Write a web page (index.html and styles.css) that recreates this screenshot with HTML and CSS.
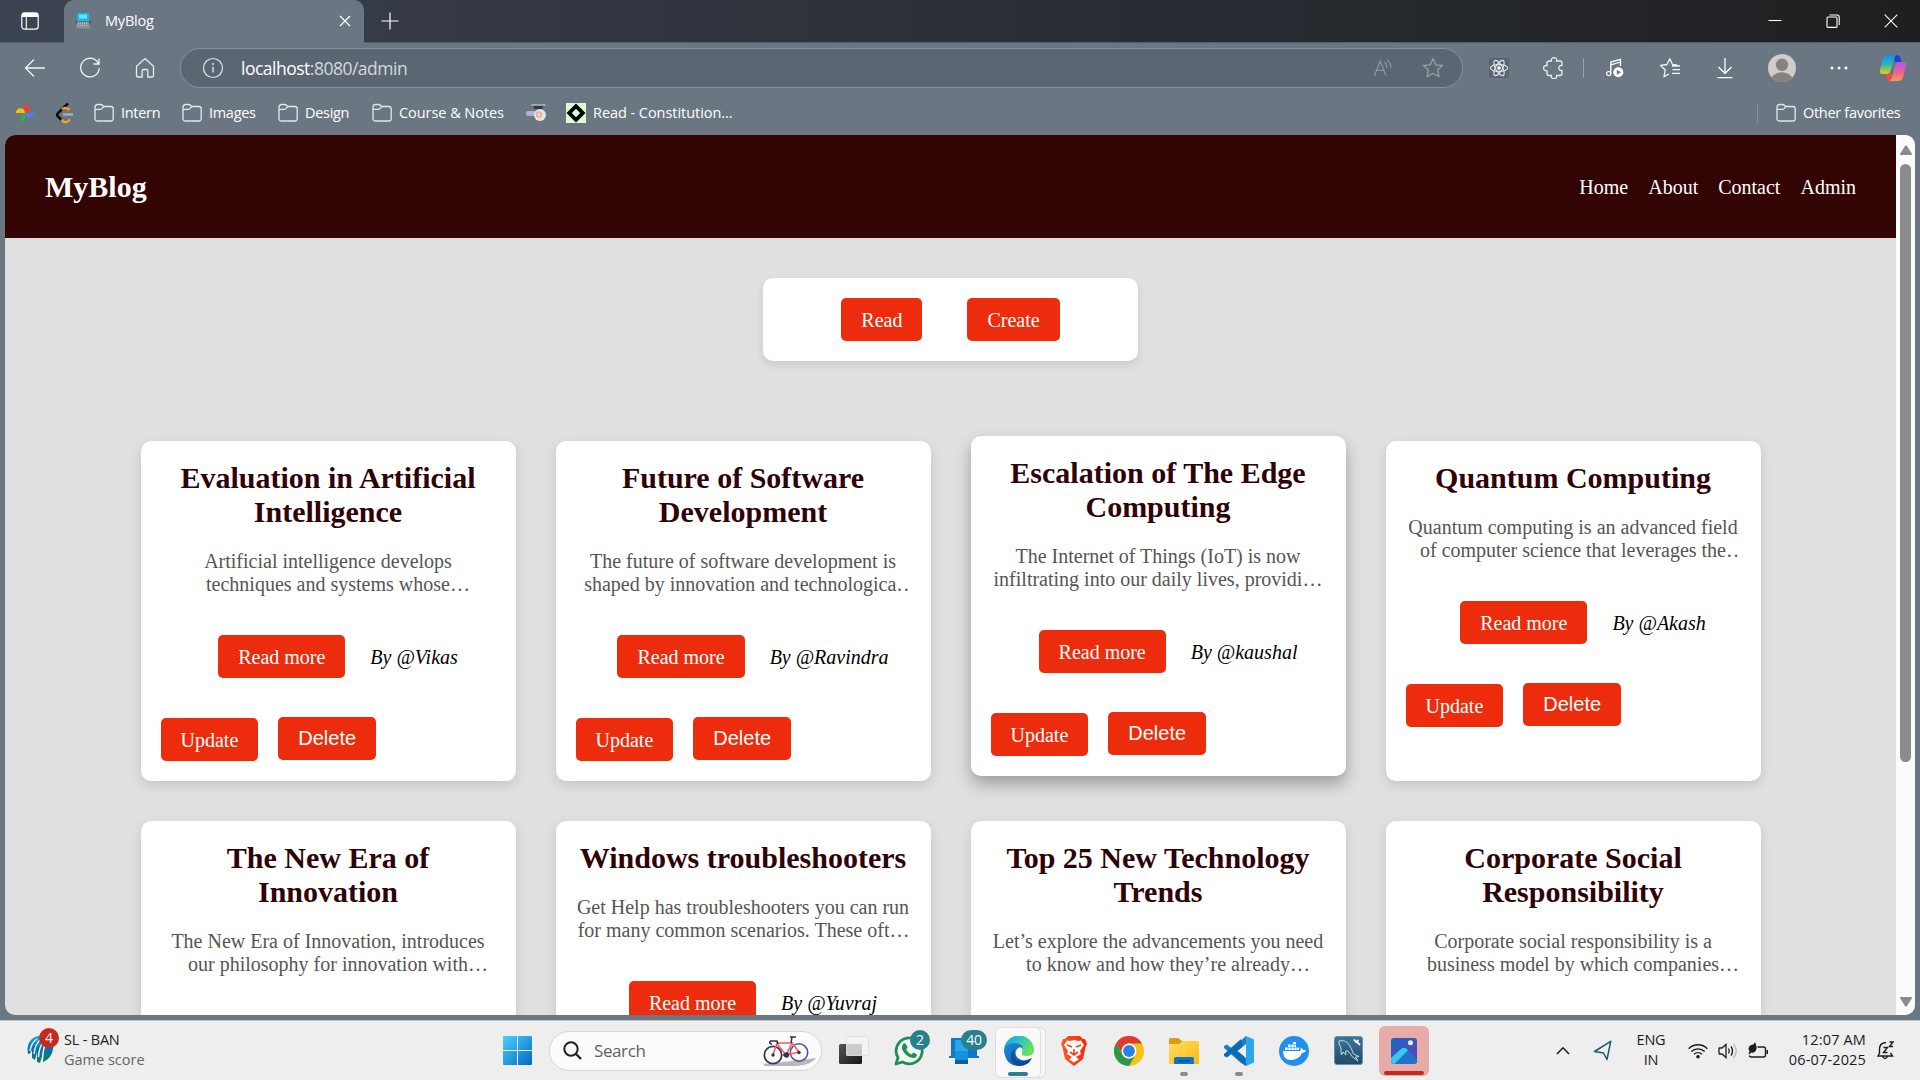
FILE: index.html
```html
<!DOCTYPE html>
<html lang="en">
<head>
<meta charset="utf-8">
<title>MyBlog</title>
<link rel="stylesheet" href="styles.css">
</head>
<body>
<svg width="0" height="0" class="defs">
  <defs>
    <symbol id="folder" viewBox="0 0 20 20"><path d="M1 4.2Q1 1.5 3.5 1.5H6.5Q7.6 1.5 8.3 2.2L9.6 3.5H16.8Q19.2 3.5 19.2 6V15.5Q19.2 18 16.8 18H3.4Q1 18 1 15.5ZM1 6.3H6.5Q7.5 6.3 8.2 5.4L9.6 3.5" fill="none" stroke="#e3e6e9" stroke-width="1.3"/></symbol>
    <linearGradient id="win" x1="0" y1="0" x2="1" y2="1"><stop offset="0" stop-color="#4dd2fb"/><stop offset="1" stop-color="#0067c8"/></linearGradient>
    <linearGradient id="edgeTop" x1="0" y1="0" x2="1" y2=".5"><stop offset="0" stop-color="#1c9fe0"/><stop offset=".5" stop-color="#2bc3c9"/><stop offset="1" stop-color="#6be05c"/></linearGradient>
    <linearGradient id="edgeLow" x1="0" y1="0" x2="1" y2="1"><stop offset="0" stop-color="#1c8fdc"/><stop offset="1" stop-color="#0c4a9a"/></linearGradient>
    <linearGradient id="globe" x1="0" y1="0" x2="0" y2="1"><stop offset="0" stop-color="#12b5ea"/><stop offset=".5" stop-color="#0a6fae"/><stop offset="1" stop-color="#10824a"/></linearGradient>
    <linearGradient id="copL" x1="0" y1="0" x2="0" y2="1"><stop offset="0" stop-color="#1a8df0"/><stop offset=".5" stop-color="#2bb8b0"/><stop offset="1" stop-color="#f2c712"/></linearGradient>
    <linearGradient id="copR" x1="0" y1="0" x2="0" y2="1"><stop offset="0" stop-color="#a45cf0"/><stop offset=".5" stop-color="#ee5c9d"/><stop offset="1" stop-color="#fb9552"/></linearGradient>
    <linearGradient id="brave" x1="0" x2="1"><stop offset="0" stop-color="#ff5a1c"/><stop offset="1" stop-color="#f5260c"/></linearGradient>
    <linearGradient id="pic" x1="0" y1="0" x2="1" y2="1"><stop offset="0" stop-color="#1668c4"/><stop offset="1" stop-color="#6b3fb0"/></linearGradient>
    <linearGradient id="sql" x1="0" y1="0" x2="0" y2="1"><stop offset="0" stop-color="#39779a"/><stop offset="1" stop-color="#204a66"/></linearGradient>
    <linearGradient id="tv" x1="0" y1="0" x2="1" y2="1"><stop offset="0" stop-color="#555"/><stop offset="1" stop-color="#161616"/></linearGradient>
    <linearGradient id="yel" x1="0" y1="0" x2="1" y2="1"><stop offset="0" stop-color="#ffdc63"/><stop offset="1" stop-color="#fbbc12"/></linearGradient>
  </defs>
</svg>

<div class="browser">
  <div class="titlebar">
    <div class="workspace"><svg width="18" height="18" viewBox="0 0 18 18"><rect x=".8" y=".8" width="16.4" height="16.4" rx="2.6" fill="none" stroke="#fff" stroke-width="1.2"/><path d="M1 5V3Q1 1 3 1H15Q17 1 17 3V5Z" fill="#fff"/><path d="M5.3 5V17" stroke="#fff" stroke-width="1.1"/></svg></div>
    <div class="tab">
      <svg width="16" height="16" viewBox="0 0 16 16"><rect x="2" y="0" width="12" height="8" rx="1" fill="#19b8e0"/><rect x="4" y="1.5" width="8" height="4" fill="#5ce7f7"/><path d="M.5 8H15.500V11H.5Z" fill="#38597a"/><path d="M2 8.500H14L15 15.500H1Z" fill="#8b8f92"/><path d="M3 10.300H13M3 12.300H13" stroke="#c4c8cb" stroke-dasharray="1 1"/></svg>
      <span class="tab-title">MyBlog</span>
      <svg width="12" height="12" viewBox="0 0 12 12"><path d="M1 1L11 11M11 1L1 11" stroke="#fff" stroke-width="1.3"/></svg>
    </div>
    <svg class="plus" width="18" height="18" viewBox="0 0 18 18"><path d="M9 .5V17.5M.5 9H17.5" stroke="#fff" stroke-width="1.2"/></svg>
    <div class="controls">
      <svg width="14" height="14" viewBox="0 0 14 14"><path d="M.5 6.5H13.5" stroke="#fff" stroke-width="1.1"/></svg>
      <svg width="14" height="14" viewBox="0 0 14 14"><rect x="1" y="3" width="10" height="10.4" rx="1" fill="none" stroke="#fff" stroke-width="1.1"/><path d="M3.5 1H11Q13.2 1 13.2 3.2V11" fill="none" stroke="#fff" stroke-width="1.1"/></svg>
      <svg width="14" height="14" viewBox="0 0 14 14"><path d="M.7 .7L13.3 13.3M13.3 .7L.7 13.3" stroke="#fff" stroke-width="1.1"/></svg>
    </div>
  </div>

  <div class="toolbar">
    <div class="cell"><svg width="22" height="22" viewBox="0 0 22 22"><path d="M21 11H2M10 2.5L1.5 11L10 19.5" fill="none" stroke="#f1f3f4" stroke-width="1.3"/></svg></div>
    <div class="cell"><svg width="22" height="22" viewBox="0 0 22 22"><path d="M19.6 7A9.3 9.3 0 1 0 20.3 11M20 1.5V7H14.5" fill="none" stroke="#f1f3f4" stroke-width="1.3"/></svg></div>
    <div class="cell"><svg width="22" height="22" viewBox="0 0 22 22"><path d="M2.5 9.3L11 1.6L19.5 9.3V18.5Q19.5 20 18 20H13.8V13.5Q13.8 12.5 12.8 12.5H9.2Q8.2 12.5 8.2 13.5V20H4Q2.5 20 2.5 18.5Z" fill="none" stroke="#e8ebed" stroke-width="1.3" stroke-linejoin="round"/></svg></div>
    <div class="address">
      <svg width="22" height="22" viewBox="0 0 22 22"><circle cx="11" cy="11" r="9.5" fill="none" stroke="#dfe2e5" stroke-width="1.2"/><path d="M11 9.7V15.5" stroke="#dfe2e5" stroke-width="1.4"/><circle cx="11" cy="7" r="1" fill="#dfe2e5"/></svg>
      <span class="url"><b>localhost</b>:8080/admin</span>
      <svg width="20" height="20" viewBox="0 0 20 20"><path d="M1.5 17.5L7.2 3L13 17.5M3.6 12.4H10.9M11.5 3.8Q13.8 6 13.8 9.5M14 1.5Q18 5 18 10" fill="none" stroke="#8e959c" stroke-width="1.3"/></svg>
      <svg class="star" width="22" height="22" viewBox="0 0 22 22"><path d="M11 1.5L13.8 7.8L20.6 8.5L15.5 13L17 19.7L11 16.3L5 19.7L6.5 13L1.4 8.5L8.2 7.8Z" fill="none" stroke="#9a9fa5" stroke-width="1.3" stroke-linejoin="round"/></svg>
    </div>
    <div class="cell first"><svg width="20" height="20" viewBox="0 0 20 20"><rect width="20" height="20" rx="1" fill="#5b6570"/><g fill="none" stroke="#e3e6e9" stroke-width="1.1"><ellipse cx="10" cy="10" rx="8.6" ry="3.4"/><ellipse cx="10" cy="10" rx="8.6" ry="3.4" transform="rotate(60 10 10)"/><ellipse cx="10" cy="10" rx="8.6" ry="3.4" transform="rotate(120 10 10)"/></g><circle cx="10" cy="10" r="1.8" fill="#fff"/></svg></div>
    <div class="cell"><svg width="22" height="22" viewBox="0 0 22 22"><path d="M4 6Q4 4 6 4H8.4A2.7 2.7 0 1 1 13.6 4H17Q19 4 19 6V8.5A2.6 2.6 0 1 0 19 13.5V16.5Q19 18.5 17 18.5H13.6A2.7 2.7 0 1 1 8.4 18.5H6Q4 18.5 4 16.5V13.8A2.7 2.7 0 1 1 4 8.6Z" fill="none" stroke="#e8ebed" stroke-width="1.3"/></svg></div>
    <span class="divider"></span>
    <div class="cell"><svg width="20" height="20" viewBox="0 0 20 20"><path d="M5.8 15.5V4L15.5 1.3V8M5.8 6.8L15.5 4" fill="none" stroke="#fff" stroke-width="1.3"/><circle cx="3.7" cy="15.6" r="2.1" fill="none" stroke="#fff" stroke-width="1.2"/><circle cx="13.3" cy="14.2" r="5" fill="#fff"/><path d="M11.8 11.7L16 14.2L11.8 16.7Z" fill="#6b7683"/></svg></div>
    <div class="cell"><svg width="22" height="22" viewBox="0 0 22 22"><path d="M18.5 8.2L13.5 7.5L10.8 1.7L8 7.5L1.5 8.4L6.2 13L5 19.8L10 17M13 9H21M13.5 12.7H21M13 16.4H21" fill="none" stroke="#f4f5f6" stroke-width="1.3" stroke-linejoin="round"/></svg></div>
    <div class="cell"><svg width="18" height="22" viewBox="0 0 18 22"><path d="M9 1V16M2.5 10L9 16.5L15.5 10M1.5 20.7H16.5" fill="none" stroke="#fff" stroke-width="1.3"/></svg></div>
    <div class="cell avatar"><svg width="28" height="28" viewBox="0 0 28 28"><clipPath id="av"><circle cx="14" cy="14" r="14"/></clipPath><g clip-path="url(#av)"><rect width="28" height="28" fill="#cfccc9"/><circle cx="14" cy="10.8" r="6.2" fill="#87827d"/><ellipse cx="14" cy="27" rx="11" ry="8.7" fill="#87827d"/></g></svg></div>
    <div class="cell"><svg width="18" height="6" viewBox="0 0 18 6"><g fill="#fff"><circle cx="2" cy="3" r="1.5"/><circle cx="9" cy="3" r="1.5"/><circle cx="16" cy="3" r="1.5"/></g></svg></div>
    <div class="cell copilot"><svg width="28" height="28" viewBox="0 0 28 28"><path d="M14 1H18.5Q20.5 1 21.3 3.5L22.6 8H16Z" fill="#1447c8"/><path d="M7 20H13L11 27H9.5Q8 27 7.5 24Z" fill="#ee4e36"/><path d="M8.5 1H18Q16 1.5 15 5L11.5 17Q10.5 20 7.5 20H3.5Q0 20 1 15.5L4 5Q5.2 1 8.5 1Z" fill="url(#copL)"/><path d="M19.5 27H10Q12 26.5 13 23L16.5 11Q17.5 8 20.5 8H24.5Q28 8 27 12.5L24 23Q22.8 27 19.5 27Z" fill="url(#copR)"/></svg></div>
  </div>

  <div class="bookmarks">
    <svg class="bm-photos" width="20" height="20" viewBox="0 0 20 20"><path d="M10 .7Q14.700 1.500 14.700 5.500V10H10Z" fill="#ea4335"/><path d="M19.300 10Q18.500 14.700 14.500 14.700Q10.500 14.500 10 10Z" fill="#4285f4"/><path d="M10 19.300Q5.300 18.500 5.300 14.500Q5.300 10.500 10 10Z" fill="#34a853"/><path d="M.7 10Q1.500 5.300 5.500 5.300Q9.500 5.500 10 10Z" fill="#fbbc04"/></svg>
    <svg class="bm-code" width="20" height="22" viewBox="0 0 20 22"><path d="M13 1.500L3 11Q1.500 13 3 14.500L7 18.500" fill="none" stroke="#0c0c0c" stroke-width="2.500"/><path d="M7 7.500Q10 4 14.500 8M6.500 17.500Q10 23 15 17.500" fill="none" stroke="#f59f1c" stroke-width="2.400"/><path d="M8 12.500H18" stroke="#b4b4b4" stroke-width="2.200"/></svg>
    <div class="bm w1"><svg width="20" height="20"><use href="#folder"/></svg><span>Intern</span></div>
    <div class="bm w2"><svg width="20" height="20"><use href="#folder"/></svg><span>Images</span></div>
    <div class="bm w3"><svg width="20" height="20"><use href="#folder"/></svg><span>Design</span></div>
    <div class="bm w4"><svg width="20" height="20"><use href="#folder"/></svg><span class="wider">Course &amp; Notes</span></div>
    <svg class="bm-grad" width="20" height="20" viewBox="0 0 20 20"><rect x="0" y="8" width="10" height="5" rx="2" fill="#a9b4d0"/><circle cx="14" cy="12" r="6" fill="#e9e2e2"/><circle cx="13" cy="11.500" r="2.400" fill="none" stroke="#f3a988" stroke-width="1.500"/><path d="M7 2.500H17L16.500 6H8.500Z" fill="#2c3a4c"/><path d="M5.500 2H19.500" stroke="#d9dde2"/></svg>
    <div class="bm w5"><svg width="20" height="20" viewBox="0 0 20 20"><rect width="20" height="20" fill="#dcfdd4"/><path d="M10 .5L19.500 10L10 19.500L.5 10Z" fill="#000"/><path d="M10 5.800L14.200 10L10 14.200L5.800 10Z" fill="#dcfdd4"/></svg><span class="wider">Read - Constitution...</span></div>
    <div class="bm other"><svg width="20" height="20"><use href="#folder"/></svg><span>Other favorites</span></div>
  </div>

  <div class="window">
    <div class="page">
      <header class="site-header">
        <h1>MyBlog</h1>
        <nav><a>Home</a><a>About</a><a>Contact</a><a>Admin</a></nav>
      </header>
      <div class="actions"><a class="btn">Read</a><a class="btn">Create</a></div>
      <div class="grid">
        <article class="card"><h2>Evaluation in Artificial Intelligence</h2><p>Artificial intelligence develops techniques and systems whose implementation resembles human reasoning.</p><div class="more"><a class="btn">Read more</a><i>By @Vikas</i></div><div class="edit"><a class="btn">Update</a><button class="btn">Delete</button></div></article>
        <article class="card"><h2>Future of Software Development</h2><p>The future of software development is shaped by innovation and technological advancements everywhere.</p><div class="more"><a class="btn">Read more</a><i>By @Ravindra</i></div><div class="edit"><a class="btn">Update</a><button class="btn">Delete</button></div></article>
        <article class="card raised"><h2>Escalation of The Edge Computing</h2><p>The Internet of Things (IoT) is now infiltrating into our daily lives, providing unprecedented convenience.</p><div class="more"><a class="btn">Read more</a><i>By @kaushal</i></div><div class="edit"><a class="btn">Update</a><button class="btn">Delete</button></div></article>
        <article class="card"><h2>Quantum Computing</h2><p>Quantum computing is an advanced field of computer science that leverages the principles of quantum mechanics.</p><div class="more"><a class="btn">Read more</a><i>By @Akash</i></div><div class="edit"><a class="btn">Update</a><button class="btn">Delete</button></div></article>
        <article class="card"><h2>The New Era of Innovation</h2><p>The New Era of Innovation, introduces our philosophy for innovation with technology at its heart.</p></article>
        <article class="card"><h2>Windows troubleshooters</h2><p>Get Help has troubleshooters you can run for many common scenarios. These often resolve problems.</p><div class="more"><a class="btn">Read more</a><i>By @Yuvraj</i></div></article>
        <article class="card"><h2>Top 25 New Technology Trends</h2><p>Let’s explore the advancements you need to know and how they’re already transforming industries.</p></article>
        <article class="card"><h2>Corporate Social Responsibility</h2><p>Corporate social responsibility is a business model by which companies integrate social concerns.</p></article>
      </div>
    </div>
    <div class="scrollbar">
      <svg width="14" height="11" viewBox="0 0 14 11"><path d="M6 1Q7 0 8 1L13 9Q13.2 10 12 10H2Q.8 10 1 9Z" fill="#8b8b8b"/></svg>
      <div class="thumb"></div>
      <svg class="down" width="14" height="11" viewBox="0 0 14 11"><path d="M6 10Q7 11 8 10L13 2Q13.2 1 12 1H2Q.8 1 1 2Z" fill="#8b8b8b"/></svg>
    </div>
  </div>
</div>

<div class="taskbar">
  <div class="widget">
    <div class="cricket"><svg width="28" height="30" viewBox="0 0 28 30"><path d="M1 20Q-2 3 16 1Q29 1 26 15Q25 24 16 28V19L13 29L10 28V18L8 26L5 24V16L2.5 20Z" fill="url(#globe)"/><path d="M3 17Q4 9 10 5M7 20Q8 10 14 5M11.5 23Q12 12 18 6M15.5 26Q16 14 19 9" fill="none" stroke="#eee" stroke-width="1.5"/></svg><span class="badge red">4</span></div>
    <div class="score"><span>SL - BAN</span><span class="sub">Game score</span></div>
  </div>
  <svg class="start" width="29" height="29" viewBox="0 0 29 29"><path d="M0 1Q0 0 1 0H14V14H0ZM15 0H28Q29 0 29 1V14H15ZM0 15H14V29H1Q0 29 0 28ZM15 15H29V28Q29 29 28 29H15Z" fill="url(#win)"/></svg>
  <div class="search">
    <svg width="19" height="19" viewBox="0 0 19 19"><circle cx="8" cy="8" r="6.7" fill="none" stroke="#222" stroke-width="2"/><path d="M12.5 12.5L18 18" stroke="#222" stroke-width="2.4"/></svg>
    <span>Search</span>
    <svg class="bike" width="54" height="32" viewBox="0 0 54 32"><path d="M1 29L30 26L54 23Q48 31 30 31H3Z" fill="#a8a8a8" opacity=".8"/><g fill="none" stroke="#3a3560"><circle cx="11" cy="20" r="8.7" stroke-width="1.8"/><circle cx="37" cy="17.5" r="8.7" stroke-width="1.6" stroke="#4b5a8c"/></g><path d="M11 20L15 8L30 8L24 20L15 9M30 8L37 17L24 20" fill="none" stroke="#f0606c" stroke-width="1.6"/><path d="M28 2H34M30 2L29 8M8 6H15L16 9M8 6Q7 9 10 9M21 20L27 19" fill="none" stroke="#332e4c" stroke-width="1.5"/><circle cx="11" cy="20" r="1.7" fill="#333"/><circle cx="37" cy="17.5" r="1.7" fill="#333"/><circle cx="24.5" cy="20" r="2.7" fill="#3a3150"/></svg>
  </div>
  <div class="apps">
    <div class="app"><svg width="30" height="30" viewBox="0 0 30 30"><rect x="0" y="8" width="23" height="20" rx="1.5" fill="url(#tv)"/><rect x="7" y="0" width="23" height="20" rx="1.5" fill="#f5f5f5" opacity=".78"/><rect x="7.5" y=".5" width="22" height="19" rx="1.5" fill="none" stroke="#d8d8d8" opacity=".7"/></svg></div>
    <div class="app"><svg width="30" height="30" viewBox="0 0 30 30"><path d="M2 28L4 21.5A13 13 0 1 1 8.5 26Z" fill="#f4f4f4" stroke="#1f8f58" stroke-width="2.8" stroke-linejoin="round"/><path d="M9 8Q11 6 12.5 9L13.5 11.5Q12 13 12.5 14Q14 17 17.5 18.5L19.5 16.5L23 18.5Q23 22 19 22Q11 20.5 8 13Q7.5 10 9 8Z" fill="#1f8f58"/></svg><span class="badge teal">2</span></div>
    <div class="app"><svg width="30" height="30" viewBox="0 0 30 30"><path d="M2 2H28V20H30V22H0V20H2Z" fill="#1676c6"/><rect x="6" y="4" width="13" height="24" rx="1" fill="#29a8e8"/><path d="M6 15H19V25H6Z" fill="#1592dc"/><path d="M6 24H19V28H6Z" fill="#145a9e"/></svg><span class="badge teal wide">40</span></div>
    <div class="app tile"><svg width="30" height="30" viewBox="0 0 30 30"><path d="M0 15A15 15 0 0 1 30 14Q30 20 23 20Q17 20 18 17Q20 9 12 8Q3 8 0 15Z" fill="url(#edgeTop)"/><path d="M0 15Q1 7 10 7Q18 7 19 13Q17 10 14 12Q9 17 14 22Q20 27 28 22Q24 30 15 30Q2 30 0 15Z" fill="url(#edgeLow)"/><path d="M11 13Q8 27 20 25L28 22Q24 30 15 30Q7 28 7 21Q7 15 11 13Z" fill="#123f86" opacity=".65"/></svg><span class="bar"></span></div>
    <div class="app"><svg width="26" height="30" viewBox="0 0 26 30"><path d="M7 0H19L22 3L24 3L26 8L24.5 11L22 23L13 30L4 23L1.5 11L0 8L2 3L4 3Z" fill="url(#brave)"/><path d="M13 4L17 5L20 4.5L23 9L19 15L20 18L15 21L18 23.500L13 26.500L8 23.500L11 21L6 18L7 15L3 9L6 4.5L9 5Z" fill="#fff"/><path d="M6 9L11 11M20 9L15 11M13 13V18M9 16L13 19L17 16" fill="none" stroke="#f4401d" stroke-width="1.600"/></svg></div>
    <div class="app"><svg width="30" height="30" viewBox="0 0 30 30"><circle cx="15" cy="15" r="15" fill="#fbc116"/><path d="M2 7.5A15 15 0 0 1 28 7.5H15A7.5 7.5 0 0 0 8.5 18.7Z" fill="#df3a30"/><path d="M2 7.5L8.5 18.8A7.5 7.5 0 0 0 21.5 18.8L15 30A15 15 0 0 1 2 7.5Z" fill="#2b9a48"/><circle cx="15" cy="15" r="7.4" fill="#fff"/><circle cx="15" cy="15" r="5.9" fill="#2f7de9"/></svg></div>
    <div class="app"><svg width="30" height="28" viewBox="0 0 30 28"><path d="M0 2.5Q0 1 1.5 1H9L13 4V9H0Z" fill="#d99c0c"/><path d="M0 7H10L13.5 4H28.5Q30 4 30 5.5V27H0Z" fill="url(#yel)"/><path d="M5 27V21.5Q5 20 6.5 20H23.5Q25 20 25 21.5V27Z" fill="#1173cc"/><path d="M9 24H21" stroke="#0a4f96" stroke-width="1.5"/></svg><span class="dot"></span></div>
    <div class="app"><svg width="30" height="30" viewBox="0 0 30 30"><path d="M22 0L8 12.5L3 8.5L0 10V12L17 27L22 30Z" fill="#1a7fc4"/><path d="M22 30L8 17.5L3 21.5L0 20V18L17 3Z" fill="#0d6bb4"/><path d="M22 8L13.5 15L22 22Z" fill="#eee"/><path d="M22 0L30 3.5V26.5L22 30Z" fill="#2da5ec"/></svg><span class="dot"></span></div>
    <div class="app"><svg width="30" height="30" viewBox="0 0 30 30"><circle cx="15" cy="15" r="15" fill="#1f90ed"/><path d="M4 15H21Q22 14 21.5 11.5Q23.5 12 24 14Q26 13.5 27 14.8Q25.5 17 23 17Q20 24 12 24Q4 24 4 15Z" fill="#fff"/><path d="M6 11.5H20V14H6ZM9 8.5H17V11H9ZM14 6H17V8H14Z" fill="#fff"/><path d="M9 11V14M12 8V14M15 8V14M18 11V14" stroke="#1f90ed" stroke-width=".6"/></svg></div>
    <div class="app"><svg width="29" height="29" viewBox="0 0 29 29"><rect x=".5" y=".5" width="28" height="28" rx="2.5" fill="url(#sql)" stroke="#6d8ea2"/><path d="M5 5Q12 3 16 10Q18 14 19.500 18L25 20.500L21.500 21L24 25Q17 21 15 16Q13 14 11.500 15L12 19L9 16Q8 20 7 18Q8 11 5 8Z" fill="none" stroke="#c3d6e0" stroke-width="1"/><path d="M20 3.500L22 6L24.500 4M23 6L26 9" fill="none" stroke="#fff" stroke-width="1.800"/></svg></div>
    <div class="app"><div class="photos-tile"><svg width="26" height="26" viewBox="0 0 26 26"><rect width="26" height="26" rx="3" fill="url(#pic)"/><path d="M0 21L10.500 11Q13 9 15.500 11L26 21V23Q26 26 23 26H3Q0 26 0 23Z" fill="#2272ce"/><path d="M0 20L10.500 10.500Q13 8.800 15.500 10.700L17 12.300L3.500 26Q0 26 0 23Z" fill="#38c5ee"/><circle cx="19.500" cy="4.700" r="2.500" fill="#f1f1ff"/></svg><span class="bar redbar"></span></div></div>
  </div>
  <div class="tray">
    <svg width="14" height="9" viewBox="0 0 14 9"><path d="M1 8L7 1.8L13 8" fill="none" stroke="#1c1c1c" stroke-width="1.6"/></svg>
    <svg class="loc" width="19" height="21" viewBox="0 0 19 21"><path d="M17.7 1.3L1.5 11.5L10.5 13L14 19.5Z" fill="none" stroke="#1c5a6b" stroke-width="1.5" stroke-linejoin="round"/></svg>
    <div class="lang"><span>ENG</span><span>IN</span></div>
    <svg class="wifi" width="20" height="16" viewBox="0 0 20 16"><path d="M.7 5.7A13 13 0 0 1 19.3 5.7M3.3 8.6A9.5 9.5 0 0 1 16.7 8.6M6 11.3A5.7 5.7 0 0 1 14 11.3" fill="none" stroke="#1c1c1c" stroke-width="1.4"/><circle cx="10" cy="13.7" r="1.8" fill="#1c1c1c"/></svg>
    <svg class="sound" width="20" height="16" viewBox="0 0 20 16"><path d="M1 5.5Q1 5 1.5 5H4L8 1.5V14.5L4 11H1.5Q1 11 1 10.5Z" fill="none" stroke="#1c1c1c" stroke-width="1.3"/><path d="M10.5 5.5Q12 8 10.5 10.5M13 3.3Q16 8 13 12.7" fill="none" stroke="#1c1c1c" stroke-width="1.3"/><path d="M15.5 1Q21 8 15.5 15" fill="none" stroke="#bbb" stroke-width="1.3"/></svg>
    <svg class="battery" width="21" height="17" viewBox="0 0 21 17"><path d="M9.500 5H15.500Q17.500 5 17.500 7V13Q17.500 15 15.500 15H3Q1.500 15 1.500 13.500" fill="none" stroke="#1c1c1c" stroke-width="1.400"/><path d="M18.500 8H20V12H18.500Z" fill="#1c1c1c"/><path d="M7 0Q9 4 8.500 7Q7 11.500 3 10.500L1.500 12.500L.5 11.500L1.500 9.500Q-1 5 3 3Q6 3 7 0Z" fill="#1c1c1c"/></svg>
    <div class="clock"><span>12:07 AM</span><span>06-07-2025</span></div>
    <svg class="bell" width="18" height="19" viewBox="0 0 18 19"><path d="M9 1.5Q2.5 2 2.5 8V12L1 15H15.5L13.5 12M5.5 15.5Q8 19.5 10.5 15.5M6.5 6.5H10.5L6.5 11.5H10.5M12.5 1H16L12.5 5.5H16" fill="none" stroke="#1c1c1c" stroke-width="1.4"/></svg>
  </div>
</div>
</body>
</html>
```
FILE: styles.css
```css
* { box-sizing: border-box; }
body { margin: 0; width: 1920px; height: 1080px; overflow: hidden; display: flex; flex-direction: column; background: #6b7683; font-family: "Open Sans", sans-serif; }
svg { display: block; flex: none; }
.defs { position: absolute; }
.browser { height: 1020px; display: flex; flex-direction: column; }

/* Tab strip */
.titlebar { height: 43px; display: flex; align-items: center; background: linear-gradient(90deg, #3c4453, #333843 25%, #292c33 60%, #1d1f20); color: #fff; border-bottom: 1px solid #555d69; }
.workspace { width: 64px; padding-left: 21px; }
.tab { width: 300px; height: 43px; margin-bottom: -1px; border-radius: 10px 10px 0 0; background: #6b7683; display: flex; align-items: center; padding: 0 13px 2px 11px; }
.tab-title { margin-left: 14px; flex: 1; font-size: 14.5px; letter-spacing: -.2px; }
.plus { margin-left: 17px; }
.controls { margin-left: auto; display: flex; gap: 44px; padding-right: 22px; }

/* Navigation row */
.toolbar { height: 50px; padding: 0 0 0 7px; display: flex; align-items: center; }
.cell { width: 55px; display: flex; justify-content: center; flex: none; }
.address { width: 1283px; height: 40px; margin-left: 8px; border: 1px solid #87909a; border-radius: 20px; background: #5b6673; display: flex; align-items: center; padding: 0 18px 0 21px; flex: none; }
.url { flex: 1; margin: -1px 0 0 17px; font-size: 17.5px; letter-spacing: -.5px; color: #d5d9dc; }
.url b { font-weight: 400; color: #fff; }
.star { margin-left: 29px; }
.first { margin-left: 8px; }
.divider { width: 1px; height: 20px; margin: 0 3px 0 2px; background: #9ba3ab; flex: none; }
.avatar { width: 59px; }
.copilot { width: 53px; }

/* Favorites */
.bookmarks { height: 42px; padding: 0 14px 2px 15px; display: flex; align-items: center; color: #fff; font-size: 14.5px; letter-spacing: -.3px; white-space: nowrap; }
.bm { display: flex; align-items: center; gap: 7px; flex: none; height: 20px; }
.bm span { margin-top: -1px; }
.bm .wider { letter-spacing: -.05px; }
.bm-code { margin-left: 20px; }
.w1 { width: 88px; margin-left: 19px; }
.w2 { width: 96px; }
.w3 { width: 94px; }
.w4 { width: 154px; }
.bm-grad { margin-right: 20px; }
.other { margin-left: auto; padding-left: 18px; border-left: 1px solid #87909a; width: 149px; }

/* Web page */
.window { height: 880px; margin: 0 5px; border-radius: 10px; overflow: hidden; display: flex; background: #e0e0e0; }
.page { width: 1891px; overflow: hidden; font-family: "Liberation Serif", serif; font-size: 20px; line-height: 23px; }
.site-header { height: 103px; padding: 0 40px; background: #330404; color: #fff; display: flex; align-items: center; justify-content: space-between; }
.site-header h1 { margin: 0; font-size: 30px; line-height: 34px; }
nav { display: flex; gap: 20px; padding-top: 2px; }
.actions { width: 375px; margin: 40px auto 80px; padding: 20px; display: flex; justify-content: center; gap: 45px; background: #fff; border-radius: 10px; box-shadow: 0 4px 8px rgba(0, 0, 0, .1); }
.btn { display: block; border: 0; border-radius: 5px; padding: 11px 20px 9px; background: #ec2c0c; color: #fff; font-size: 20px; line-height: 23px; }
button.btn { font-family: "Liberation Sans", sans-serif; margin-top: -1px; padding: 10px 20px; }
.grid { display: grid; grid-template-columns: repeat(4, 375px); grid-auto-rows: 340px; gap: 40px; justify-content: center; }
.card { padding: 20px; background: #fff; border-radius: 10px; box-shadow: 0 4px 12px rgba(0, 0, 0, .12); text-align: center; }
.raised { transform: translateY(-5px); box-shadow: 0 8px 16px rgba(0, 0, 0, .3); }
.card h2 { margin: 0 0 20px; font-size: 30px; line-height: 34px; color: #2e0206; }
.card p { margin: 0 0 39px; padding-top: 1px; color: #555; display: -webkit-box; -webkit-box-orient: vertical; -webkit-line-clamp: 2; overflow: hidden; }
.more { display: flex; justify-content: center; align-items: center; gap: 25px; margin: 0 0 40px 20px; }
.more i { padding-top: 2px; }
.edit { display: flex; align-items: flex-start; gap: 20px; }
.scrollbar { width: 19px; background: #fcfcfc; display: flex; flex-direction: column; align-items: center; padding: 10px 0 8px; }
.thumb { width: 11px; height: 598px; margin-top: 8px; border-radius: 6px; background: #8b8b8b; }
.down { margin-top: auto; }

/* Taskbar */
.taskbar { height: 60px; background: #eee; border-top: 1px solid #bfc1c4; display: flex; align-items: center; color: #1c1c1c; font-size: 14.5px; line-height: 20px; letter-spacing: -.2px; }
.widget { width: 503px; padding-left: 27px; display: flex; align-items: center; gap: 9px; }
.cricket { position: relative; margin-top: -4px; }
.score, .lang, .clock { display: flex; flex-direction: column; margin-top: -2px; }
.sub { color: #666; letter-spacing: 0; }
.badge { position: absolute; min-width: 20px; height: 20px; border-radius: 10px; color: #fff; font-size: 14px; line-height: 20px; text-align: center; }
.badge.red { left: 12px; top: -6px; background: #c42b1c; }
.badge.teal { left: 29px; top: 8px; background: #27808e; }
.badge.wide { left: 25px; width: 26px; }
.search { width: 273px; height: 40px; margin-left: 17px; border: 1px solid #d6d6d6; border-radius: 20px; background: #fbfbfb; display: flex; align-items: center; padding: 0 5px 0 13px; font-size: 17px; color: #616161; }
.search span { margin-left: 12px; flex: 1; letter-spacing: -.4px; }
.apps { display: flex; margin-left: 4px; }
.app { position: relative; width: 55px; height: 58px; display: flex; align-items: center; justify-content: center; }
.app > svg, .tile > svg { position: relative; }
.tile::before { content: ""; position: absolute; left: 4px; top: 5px; width: 44px; height: 49px; border: 1px solid #dedede; border-radius: 6px; background: #f9f9f9; box-shadow: 5px 0 0 -1px #f5f5f5, 5px 0 0 #dedede; }
.bar { position: absolute; left: 17px; bottom: 4px; width: 20px; height: 4px; border-radius: 2px; background: #27808e; }
.dot { position: absolute; left: 24px; bottom: 4px; width: 8px; height: 4px; border-radius: 2px; background: #8a8a8a; }
.photos-tile { position: relative; width: 50px; height: 50px; border-radius: 6px; background: #e8aca8; display: flex; align-items: center; justify-content: center; }
.redbar { left: 5px; bottom: 1px; width: 40px; background: #c42b1c; }
.tray { margin-left: auto; display: flex; align-items: center; padding-right: 25px; }
.loc { margin-left: 23px; }
.lang { width: 36px; margin-left: 21px; align-items: center; }
.wifi { margin-left: 19px; }
.sound { margin-left: 10px; }
.battery { margin-left: 10px; }
.clock { width: 97px; align-items: flex-end; letter-spacing: .15px; }
.bell { margin-left: 11px; }
```
